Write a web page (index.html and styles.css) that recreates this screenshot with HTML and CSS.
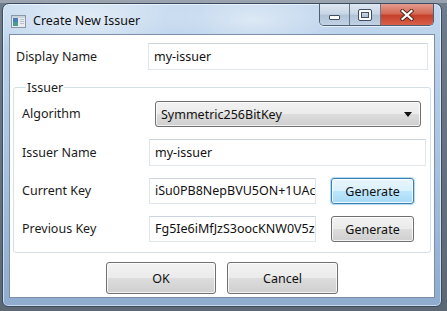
FILE: index.html
```html
<!DOCTYPE html>
<html>
<head>
<meta charset="utf-8">
<link rel="stylesheet" href="styles.css">
</head>
<body>
<div class="window">
  <div class="titlebar">
    <svg class="appicon" width="15" height="13" viewBox="0 0 15 13">
      <rect x="0.5" y="0.5" width="14" height="12" fill="#e8ecef" stroke="#8a98a6"/>
      <rect x="1" y="1" width="13" height="2" fill="#c9d3dc"/>
      <rect x="2" y="3" width="5" height="8" fill="#4f9a8c"/>
      <rect x="2" y="3" width="5" height="4" fill="#4a7fb8"/>
      <rect x="9" y="4" width="4" height="1" fill="#b7c2cc"/>
      <rect x="9" y="6" width="4" height="1" fill="#b7c2cc"/>
      <rect x="9" y="8" width="4" height="1" fill="#b7c2cc"/>
    </svg>
    <span class="title">Create New Issuer</span>
    <div class="caption">
      <div class="cbtn cmin"><span class="glyph-min"></span></div>
      <div class="cbtn cmax"><span class="glyph-max"></span></div>
      <div class="cbtn cclose">
        <svg width="14" height="12" viewBox="0 0 14 12">
          <path d="M2.5 2 L11.5 10 M11.5 2 L2.5 10" stroke="#5a2a22" stroke-width="4.2" stroke-linecap="square"/>
          <path d="M2.5 2 L11.5 10 M11.5 2 L2.5 10" stroke="#ffffff" stroke-width="2.2" stroke-linecap="square"/>
        </svg>
      </div>
    </div>
  </div>
  <div class="client">
    <div class="toprow">
      <label class="lbl">Display Name</label>
      <div class="textbox wide">my-issuer</div>
    </div>
    <fieldset class="group">
      <legend>Issuer</legend>
      <div class="grid">
        <label class="lbl">Algorithm</label>
        <div class="combo"><span>Symmetric256BitKey</span><span class="arrow"></span></div>
        <label class="lbl">Issuer Name</label>
        <div class="textbox full">my-issuer</div>
        <label class="lbl">Current Key</label>
        <div class="keyrow">
          <div class="textbox key">iSu0PB8NepBVU5ON+1UAc2kY</div>
          <button class="btn gen focused">Generate</button>
        </div>
        <label class="lbl">Previous Key</label>
        <div class="keyrow">
          <div class="textbox key">Fg5Ie6iMfJzS3oocKNW0V5zQ</div>
          <button class="btn gen">Generate</button>
        </div>
      </div>
    </fieldset>
    <div class="actions">
      <button class="btn dlg">OK</button>
      <button class="btn dlg">Cancel</button>
    </div>
  </div>
</div>
</body>
</html>
```
FILE: styles.css
```css
html, body {
  margin: 0;
  padding: 0;
}
body {
  width: 447px;
  height: 311px;
  overflow: hidden;
  background: linear-gradient(180deg, #9aa3ad 0px, #9aa3ad 3px, #6f7c8b 3px, #5d6875 100%);
  font-family: "Noto Sans", "Open Sans", sans-serif;
  font-size: 12px;
  color: #1b1b1b;
}
.window {
  margin: 3px 0 0 2px;
  width: 440px;
  height: 304px;
  box-sizing: border-box;
  border: 1px solid #3a4c62;
  border-radius: 7px 7px 6px 6px;
  padding: 0 6px 8px 6px;
  display: flex;
  flex-direction: column;
  background:
    radial-gradient(ellipse 120px 40px at 80px 14px, rgba(255,255,255,0.55), rgba(255,255,255,0) 100%),
    radial-gradient(ellipse 90px 30px at 250px 16px, rgba(255,255,255,0.45), rgba(255,255,255,0) 100%),
    linear-gradient(180deg, #c3d8ee 0px, #bcd3ec 30px, #a9c3e1 150px, #8fabcd 100%);
  box-shadow: inset 0 0 0 1px rgba(255,255,255,0.55);
}
.titlebar {
  height: 30px;
  display: flex;
  align-items: flex-start;
  flex: none;
}
.appicon {
  margin: 11px 0 0 2px;
  flex: none;
}
.title {
  margin: 8px 0 0 7px;
  font-size: 12.5px;
  line-height: 18px;
  color: #111;
  flex: 1;
}
.caption {
  display: flex;
  margin-right: 1px;
  height: 21px;
  border: 1px solid #4e5e73;
  border-top: none;
  border-radius: 0 0 5px 5px;
  overflow: hidden;
  box-shadow: 0 1px 0 rgba(255,255,255,0.6);
}
.cbtn {
  display: flex;
  align-items: center;
  justify-content: center;
  height: 21px;
  box-sizing: border-box;
}
.cmin, .cmax {
  width: 30px;
  background: linear-gradient(180deg, #dfe8f2 0%, #c9d6e5 45%, #b2c3d8 55%, #c2d2e4 100%);
  border-right: 1px solid #66778c;
}
.cmax { width: 31px; }
.cclose {
  width: 52px;
  background: linear-gradient(180deg, #e49a8b 0%, #d56b58 45%, #c6402a 55%, #d8604a 100%);
}
.glyph-min {
  display: block;
  width: 9px;
  height: 3px;
  margin-top: 6px;
  background: #fff;
  border: 1px solid #3f4f63;
  border-radius: 1px;
}
.glyph-max {
  display: block;
  width: 8px;
  height: 6px;
  border: 2px solid #fff;
  outline: 1px solid #3f4f63;
  box-shadow: inset 0 0 0 1px #3f4f63;
  border-radius: 1px;
}
.client {
  flex: 1;
  background: #fff;
  border: 1px solid #7c8ea6;
  padding: 8px 6px 3px 6px;
  display: flex;
  flex-direction: column;
}
.toprow {
  display: grid;
  grid-template-columns: 132px 1fr;
  align-items: center;
  height: 27px;
}
.lbl {
  font-size: 12.5px;
  line-height: 16px;
  color: #1b1b1b;
  white-space: nowrap;
}
.textbox {
  box-sizing: border-box;
  height: 27px;
  border: 1px solid #dfe5ec;
  border-top-color: #ccd4dd;
  background: #fff;
  padding: 0 5px;
  font-size: 12.5px;
  line-height: 25px;
  white-space: nowrap;
  overflow: hidden;
  color: #111;
}
.group {
  margin: 9px -3px 0 -3px;
  padding: 0 4px 10px 8px;
  border: 1px solid #d5dfe6;
  border-radius: 3px;
  min-width: 0;
}
.group legend {
  margin-left: 4px;
  padding: 0 1px;
  font-size: 12.5px;
  line-height: 17px;
  color: #1b1b1b;
}
.grid {
  margin-top: 5px;
  display: grid;
  grid-template-columns: 127px 1fr;
  grid-template-rows: 26px 27px 26px 26px;
  row-gap: 12px;
  align-items: center;
}
.combo {
  margin: 0 5px 0 6px;
  height: 26px;
  box-sizing: border-box;
  border: 1px solid #707070;
  border-radius: 3px;
  background: linear-gradient(180deg, #f2f2f2 0%, #ebebeb 50%, #dddddd 50%, #cfcfcf 100%);
  box-shadow: inset 0 0 0 1px rgba(255,255,255,0.7);
  display: flex;
  align-items: center;
  justify-content: space-between;
  padding: 0 8px 0 5px;
  font-size: 12.5px;
  color: #111;
}
.arrow {
  width: 0;
  height: 0;
  border-left: 4px solid transparent;
  border-right: 4px solid transparent;
  border-top: 5px solid #111;
  margin-top: 1px;
}
.keyrow {
  display: flex;
  align-items: center;
  height: 26px;
}
.textbox.key {
  width: 167px;
  height: 26px;
  line-height: 24px;
}
.btn {
  font-family: "Noto Sans", "Open Sans", sans-serif;
  font-size: 12.5px;
  color: #111;
  box-sizing: border-box;
  border: 1px solid #707070;
  border-radius: 3px;
  background: linear-gradient(180deg, #f2f2f2 0%, #ebebeb 50%, #dddddd 50%, #cfcfcf 100%);
  box-shadow: inset 0 0 0 1px rgba(255,255,255,0.75);
  padding: 0;
  margin: 0;
  cursor: default;
}
.gen {
  margin-left: 15px;
  width: 83px;
  height: 26px;
}
.gen.focused {
  border-color: #3c7fb1;
  background: linear-gradient(180deg, #eaf6fd 0%, #d9f0fc 50%, #bee6fd 50%, #a7d9f5 100%);
  box-shadow: inset 0 0 0 1px rgba(255,255,255,0.8), 0 0 0 1px rgba(38,160,218,0.35);
}
.actions {
  margin-top: 9px;
  display: flex;
  justify-content: center;
  gap: 11px;
}
.dlg {
  width: 110px;
  height: 32px;
}
.dlg + .dlg { width: 111px; }
```
